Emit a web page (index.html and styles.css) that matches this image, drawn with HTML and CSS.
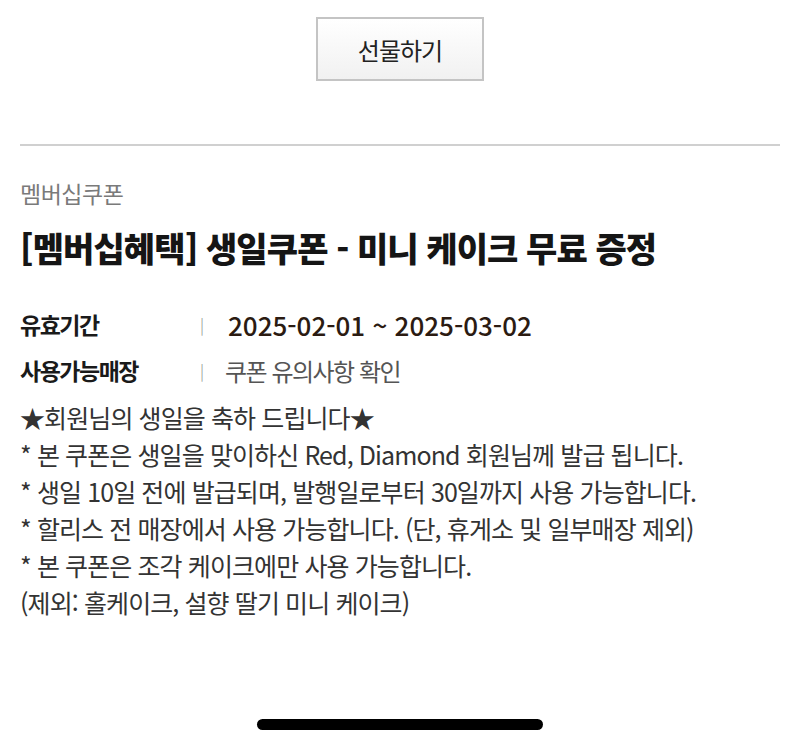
FILE: index.html
```html
<!DOCTYPE html>
<html lang="ko">
<head>
<meta charset="utf-8">
<link rel="stylesheet" href="styles.css">
</head>
<body>
<div class="page">
  <div class="btn-wrap">
    <div class="gift-btn">선물하기</div>
  </div>
  <hr class="divider">
  <div class="category">멤버십쿠폰</div>
  <h1 class="title">[멤버십혜택] 생일쿠폰 - 미니 케이크 무료 증정</h1>
  <div class="info">
    <div class="row">
      <div class="label">유효기간</div>
      <div class="sep">|</div>
      <div class="date">2025-02-01 ~ 2025-03-02</div>
    </div>
    <div class="row">
      <div class="label">사용가능매장</div>
      <div class="sep">|</div>
      <div class="value">쿠폰 유의사항 확인</div>
    </div>
  </div>
  <div class="notes">
    <p>★회원님의 생일을 축하 드립니다★</p>
    <p>* 본 쿠폰은 생일을 맞이하신 Red, Diamond 회원님께 발급 됩니다.</p>
    <p>* 생일 10일 전에 발급되며, 발행일로부터 30일까지 사용 가능합니다.</p>
    <p>* 할리스 전 매장에서 사용 가능합니다. (단, 휴게소 및 일부매장 제외)</p>
    <p>* 본 쿠폰은 조각 케이크에만 사용 가능합니다.</p>
    <p>(제외: 홀케이크, 설향 딸기 미니 케이크)</p>
  </div>
  <div class="home-wrap"><div class="home-bar"></div></div>
</div>
</body>
</html>
```

FILE: styles.css
```css
* { box-sizing: border-box; }
html, body { margin: 0; padding: 0; background: #fff; }
body {
  font-family: "Noto Sans CJK KR", "Noto Sans", sans-serif;
  color: #222;
}
.page {
  width: 800px;
  height: 747px;
  padding: 0 20px;
  display: flex;
  flex-direction: column;
}
.btn-wrap {
  display: flex;
  justify-content: center;
  padding-top: 17px;
}
.gift-btn {
  width: 168px;
  height: 64px;
  border: 2px solid #c4c4c4;
  background: linear-gradient(#ffffff, #f1f1f1);
  display: flex;
  align-items: center;
  justify-content: center;
  font-size: 24px;
  color: #222;
  letter-spacing: -1px;
}
.divider {
  margin: 63px 0 0;
  border: 0;
  border-top: 2px solid #d0d0d0;
  height: 0;
}
.category {
  margin-top: 33px;
  font-size: 23px;
  line-height: 28px;
  color: #7a7a7a;
  letter-spacing: -0.5px;
}
.title {
  margin: 21px 0 0;
  font-size: 34px;
  line-height: 40px;
  font-weight: 900;
  color: #151515;
  letter-spacing: -0.9px;
}
.info {
  margin-top: 40px;
  display: flex;
  flex-direction: column;
  gap: 14px;
}
.row {
  display: flex;
  align-items: center;
  height: 32px;
}
.label {
  width: 180px;
  font-size: 23px;
  font-weight: 700;
  color: #1a1a1a;
  letter-spacing: -1.5px;
}
.sep {
  width: 25px;
  font-size: 16px;
  color: #888;
  font-weight: 300;
}
.date {
  font-size: 26px;
  font-weight: 500;
  color: #2b1b12;
  margin-left: 3px;
}
.value {
  font-size: 24px;
  color: #555;
  letter-spacing: -1.5px;
}
.notes {
  margin-top: 13px;
  font-size: 25px;
  color: #333;
  letter-spacing: -0.9px;
}
.notes p {
  margin: 0;
  line-height: 37px;
}
.home-wrap {
  margin-top: auto;
  padding-bottom: 17px;
  display: flex;
  justify-content: center;
}
.home-bar {
  width: 286px;
  height: 11px;
  border-radius: 6px;
  background: #000;
}
```
